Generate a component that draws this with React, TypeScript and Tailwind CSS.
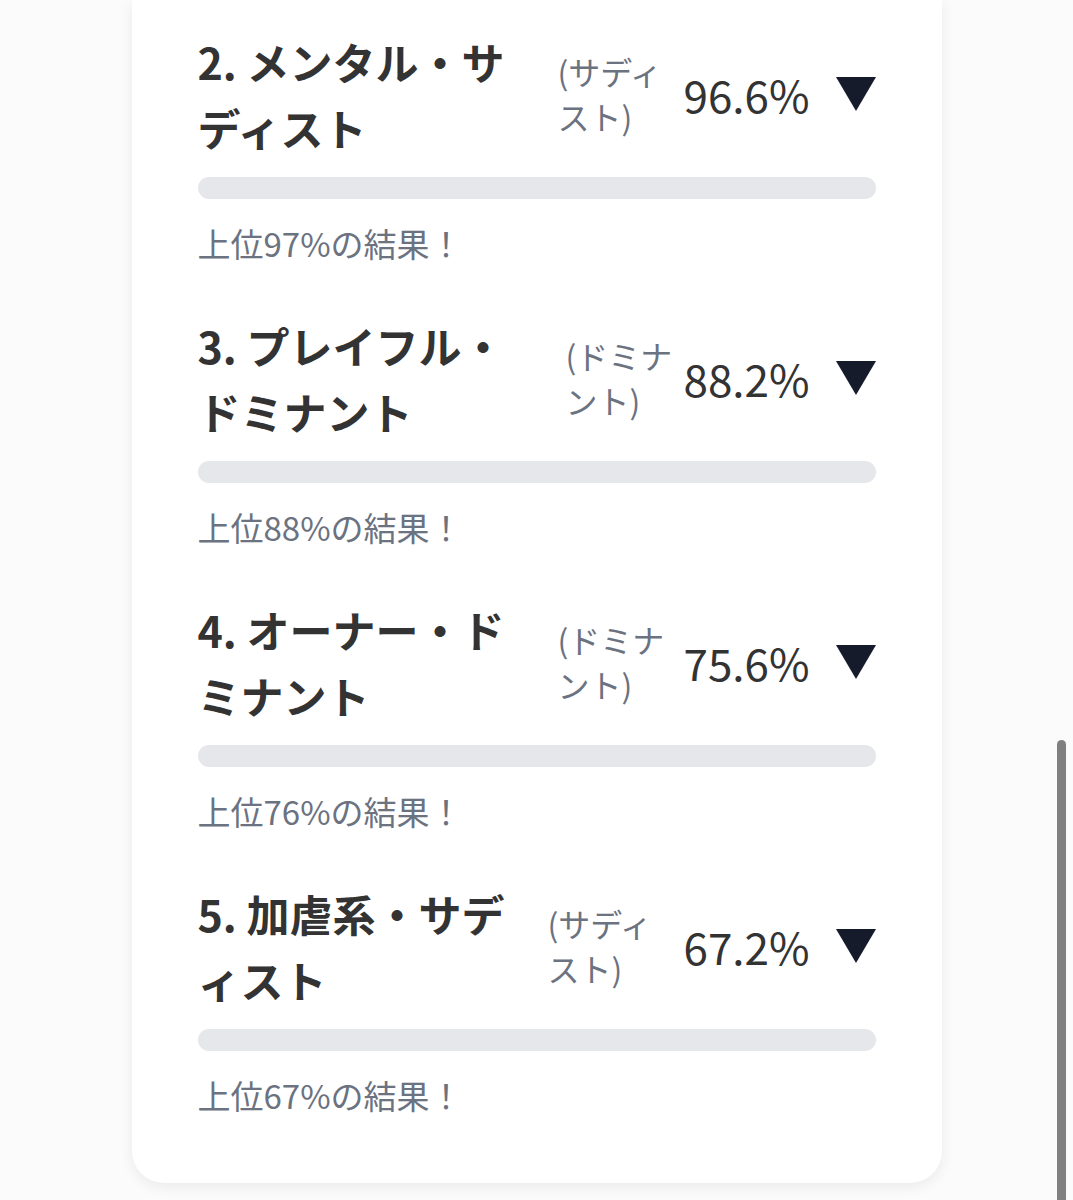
import React from "react";

type Item = {
  title: string;
  sub: string;
  subMl: string;
  pct: string;
  rank: string;
};

const items: Item[] = [
  { title: "2. メンタル・サディスト", sub: "(サディスト)", subMl: "ml-[30px]", pct: "96.6%", rank: "上位97%の結果！" },
  { title: "3. プレイフル・ドミナント", sub: "(ドミナント)", subMl: "ml-[38px]", pct: "88.2%", rank: "上位88%の結果！" },
  { title: "4. オーナー・ドミナント", sub: "(ドミナント)", subMl: "ml-[30px]", pct: "75.6%", rank: "上位76%の結果！" },
  { title: "5. 加虐系・サディスト", sub: "(サディスト)", subMl: "ml-[20px]", pct: "67.2%", rank: "上位67%の結果！" },
];

function Row({ item }: { item: Item }) {
  return (
    <div className="flex flex-col">
      <div className="flex items-center">
        <h3 className="w-[330px] shrink-0 text-[43px] font-bold leading-[66px] text-[#333333]">
          {item.title}
        </h3>
        <span className={`${item.subMl} w-[112px] shrink-0 text-[32px] leading-[45px] text-[#6b7280]`}>
          {item.sub}
        </span>
        <div className="ml-auto flex shrink-0 items-center gap-[26px]">
          <span className="text-[44px] leading-[60px] text-[#333333]">{item.pct}</span>
          <svg width="40" height="34" viewBox="0 0 40 34" className="shrink-0">
            <polygon points="0,0 40,0 20,34" fill="#151b2b" />
          </svg>
        </div>
      </div>
      <div className="mt-[17px] h-[22px] w-full rounded-full bg-[#e5e7eb]" />
      <p className="mt-[20px] text-[33px] leading-[48px] text-[#6b7280]">{item.rank}</p>
    </div>
  );
}

export default function App() {
  return (
    <div
      className="relative min-h-[1200px] w-full overflow-hidden bg-[#fbfbfb]"
      style={{ fontFamily: '"Noto Sans CJK JP", "Noto Sans", sans-serif' }}
    >
      <div className="mx-auto w-[810px] rounded-b-[32px] bg-white px-[66px] pb-[64px] pt-[28px] shadow-[0_4px_14px_rgba(0,0,0,0.07)]">
        <div className="flex flex-col gap-[45px]">
          {items.map((it) => (
            <Row key={it.title} item={it} />
          ))}
        </div>
      </div>
      <div className="absolute left-[1057px] top-[740px] h-[480px] w-[9px] rounded-t-full bg-[#808080]" />
    </div>
  );
}
